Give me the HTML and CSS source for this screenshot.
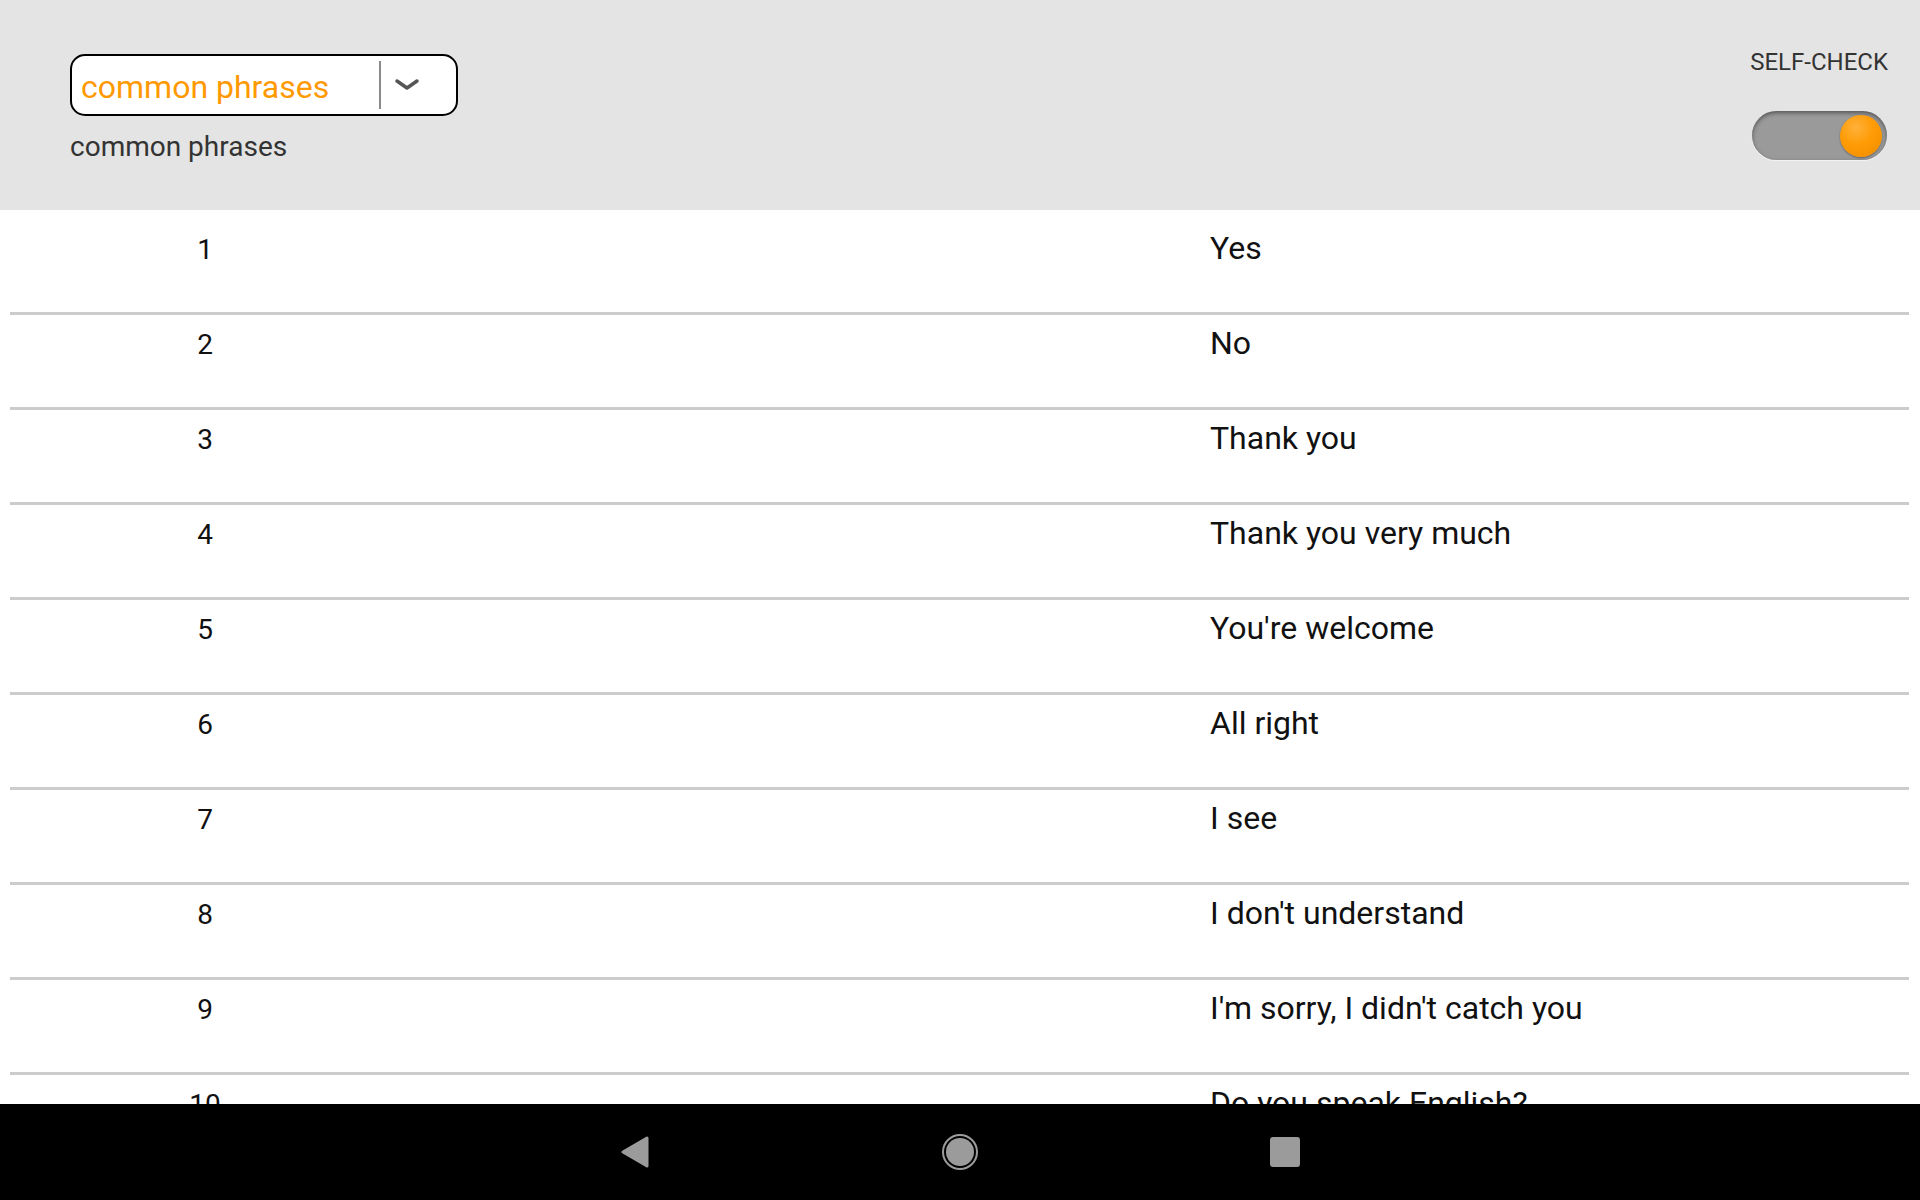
FILE: index.html
```html
<!DOCTYPE html>
<html lang="en">
<head>
    <meta charset="UTF-8">
    <meta name="viewport" content="width=device-width, initial-scale=1.0">
    <title>Common phrases</title>
    <link rel="stylesheet" href="styles.css">
</head>
<body>
    <header class="topbar">
        <div class="category">
            <div class="picker">
                <span class="picker-value">common phrases</span>
                <span class="picker-arrow">
                    <svg width="26" height="14" viewBox="0 0 26 14"><path d="M3 3 L13 10 L23 3" fill="none" stroke="#555" stroke-width="3.5" stroke-linecap="round" stroke-linejoin="round"/></svg>
                </span>
            </div>
            <div class="category-name">common phrases</div>
        </div>
        <div class="self-check">
            <span class="self-check-label">SELF-CHECK</span>
            <div class="switch"><span class="switch-thumb"></span></div>
        </div>
    </header>

    <main class="phrases">
        <div class="row"><span class="num">1</span><span class="text">Yes</span></div>
        <div class="row"><span class="num">2</span><span class="text">No</span></div>
        <div class="row"><span class="num">3</span><span class="text">Thank you</span></div>
        <div class="row"><span class="num">4</span><span class="text">Thank you very much</span></div>
        <div class="row"><span class="num">5</span><span class="text">You're welcome</span></div>
        <div class="row"><span class="num">6</span><span class="text">All right</span></div>
        <div class="row"><span class="num">7</span><span class="text">I see</span></div>
        <div class="row"><span class="num">8</span><span class="text">I don't understand</span></div>
        <div class="row"><span class="num">9</span><span class="text">I'm sorry, I didn't catch you</span></div>
        <div class="row"><span class="num">10</span><span class="text">Do you speak English?</span></div>
    </main>

    <nav class="navbar">
        <span class="nav-btn">
            <svg width="30" height="34" viewBox="0 0 30 34"><path d="M27 3 L27 31 L3 17 Z" fill="#9b9b9b" stroke="#9b9b9b" stroke-width="3" stroke-linejoin="round"/></svg>
        </span>
        <span class="nav-btn">
            <svg width="38" height="38" viewBox="0 0 38 38"><circle cx="19" cy="19" r="17" fill="none" stroke="#9b9b9b" stroke-width="2"/><circle cx="19" cy="19" r="14" fill="#9b9b9b"/></svg>
        </span>
        <span class="nav-btn">
            <svg width="30" height="30" viewBox="0 0 30 30"><rect x="0" y="0" width="30" height="30" rx="3" fill="#9b9b9b"/></svg>
        </span>
    </nav>
</body>
</html>
```

FILE: styles.css
```css
html, body {
    margin: 0;
    padding: 0;
}
body {
    font-family: Roboto, "Liberation Sans", sans-serif;
    height: 1200px;
    display: flex;
    flex-direction: column;
    overflow: hidden;
    background-color: #fff;
}
.topbar {
    height: 210px;
    box-sizing: border-box;
    flex-shrink: 0;
    background-color: #e4e4e4;
    display: flex;
    justify-content: space-between;
    align-items: flex-start;
    padding: 48px 32px 0 70px;
}
.category {
    padding-top: 6px;
}
.picker {
    width: 388px;
    height: 62px;
    box-sizing: border-box;
    border: 2px solid #000;
    border-radius: 15px;
    background-color: #fff;
    display: flex;
    align-items: center;
}
.picker-value {
    flex: 1;
    padding-left: 9px;
    padding-top: 4px;
    font-size: 32px;
    color: #ff9900;
}
.picker-arrow {
    align-self: stretch;
    margin: 5px 0;
    width: 77px;
    border-left: 2px solid #8a8a8a;
    display: flex;
    align-items: center;
    padding-left: 13px;
    box-sizing: border-box;
}
.category-name {
    margin-top: 14px;
    font-size: 28px;
    color: #333;
}
.self-check {
    display: flex;
    flex-direction: column;
    align-items: center;
}
.self-check-label {
    font-size: 24px;
    color: #333;
    line-height: 28px;
}
.switch {
    margin-top: 35px;
    width: 135px;
    height: 49px;
    box-sizing: border-box;
    border-radius: 25px;
    background-color: #9a9a9a;
    box-shadow: inset 0 2px 4px rgba(0, 0, 0, 0.45), 0 1px 1px rgba(255, 255, 255, 0.6);
    display: flex;
    align-items: center;
    justify-content: flex-end;
    padding-right: 5px;
}
.switch-thumb {
    width: 42px;
    height: 42px;
    border-radius: 50%;
    background: radial-gradient(circle at 38% 30%, #ffb13a 0%, #ff9b05 45%, #f59300 75%, #d98100 100%);
    box-shadow: 0 1px 2px rgba(0, 0, 0, 0.35);
}
.phrases {
    flex: 1;
    overflow: hidden;
    padding: 10px 11px 0 10px;
}
.row {
    display: grid;
    grid-template-columns: 390px 810px 1fr;
    align-items: baseline;
    height: 95px;
    box-sizing: border-box;
    padding-top: 8px;
    border-bottom: 3px solid #cccccc;
    line-height: 40px;
    color: #111;
}
.num {
    font-size: 28px;
    text-align: center;
}
.text {
    grid-column: 3;
    font-size: 32px;
}
.navbar {
    height: 96px;
    flex-shrink: 0;
    background-color: #000;
    display: flex;
    justify-content: center;
    align-items: center;
    gap: 245px;
}
.nav-btn {
    width: 80px;
    display: flex;
    justify-content: center;
    align-items: center;
}
```
